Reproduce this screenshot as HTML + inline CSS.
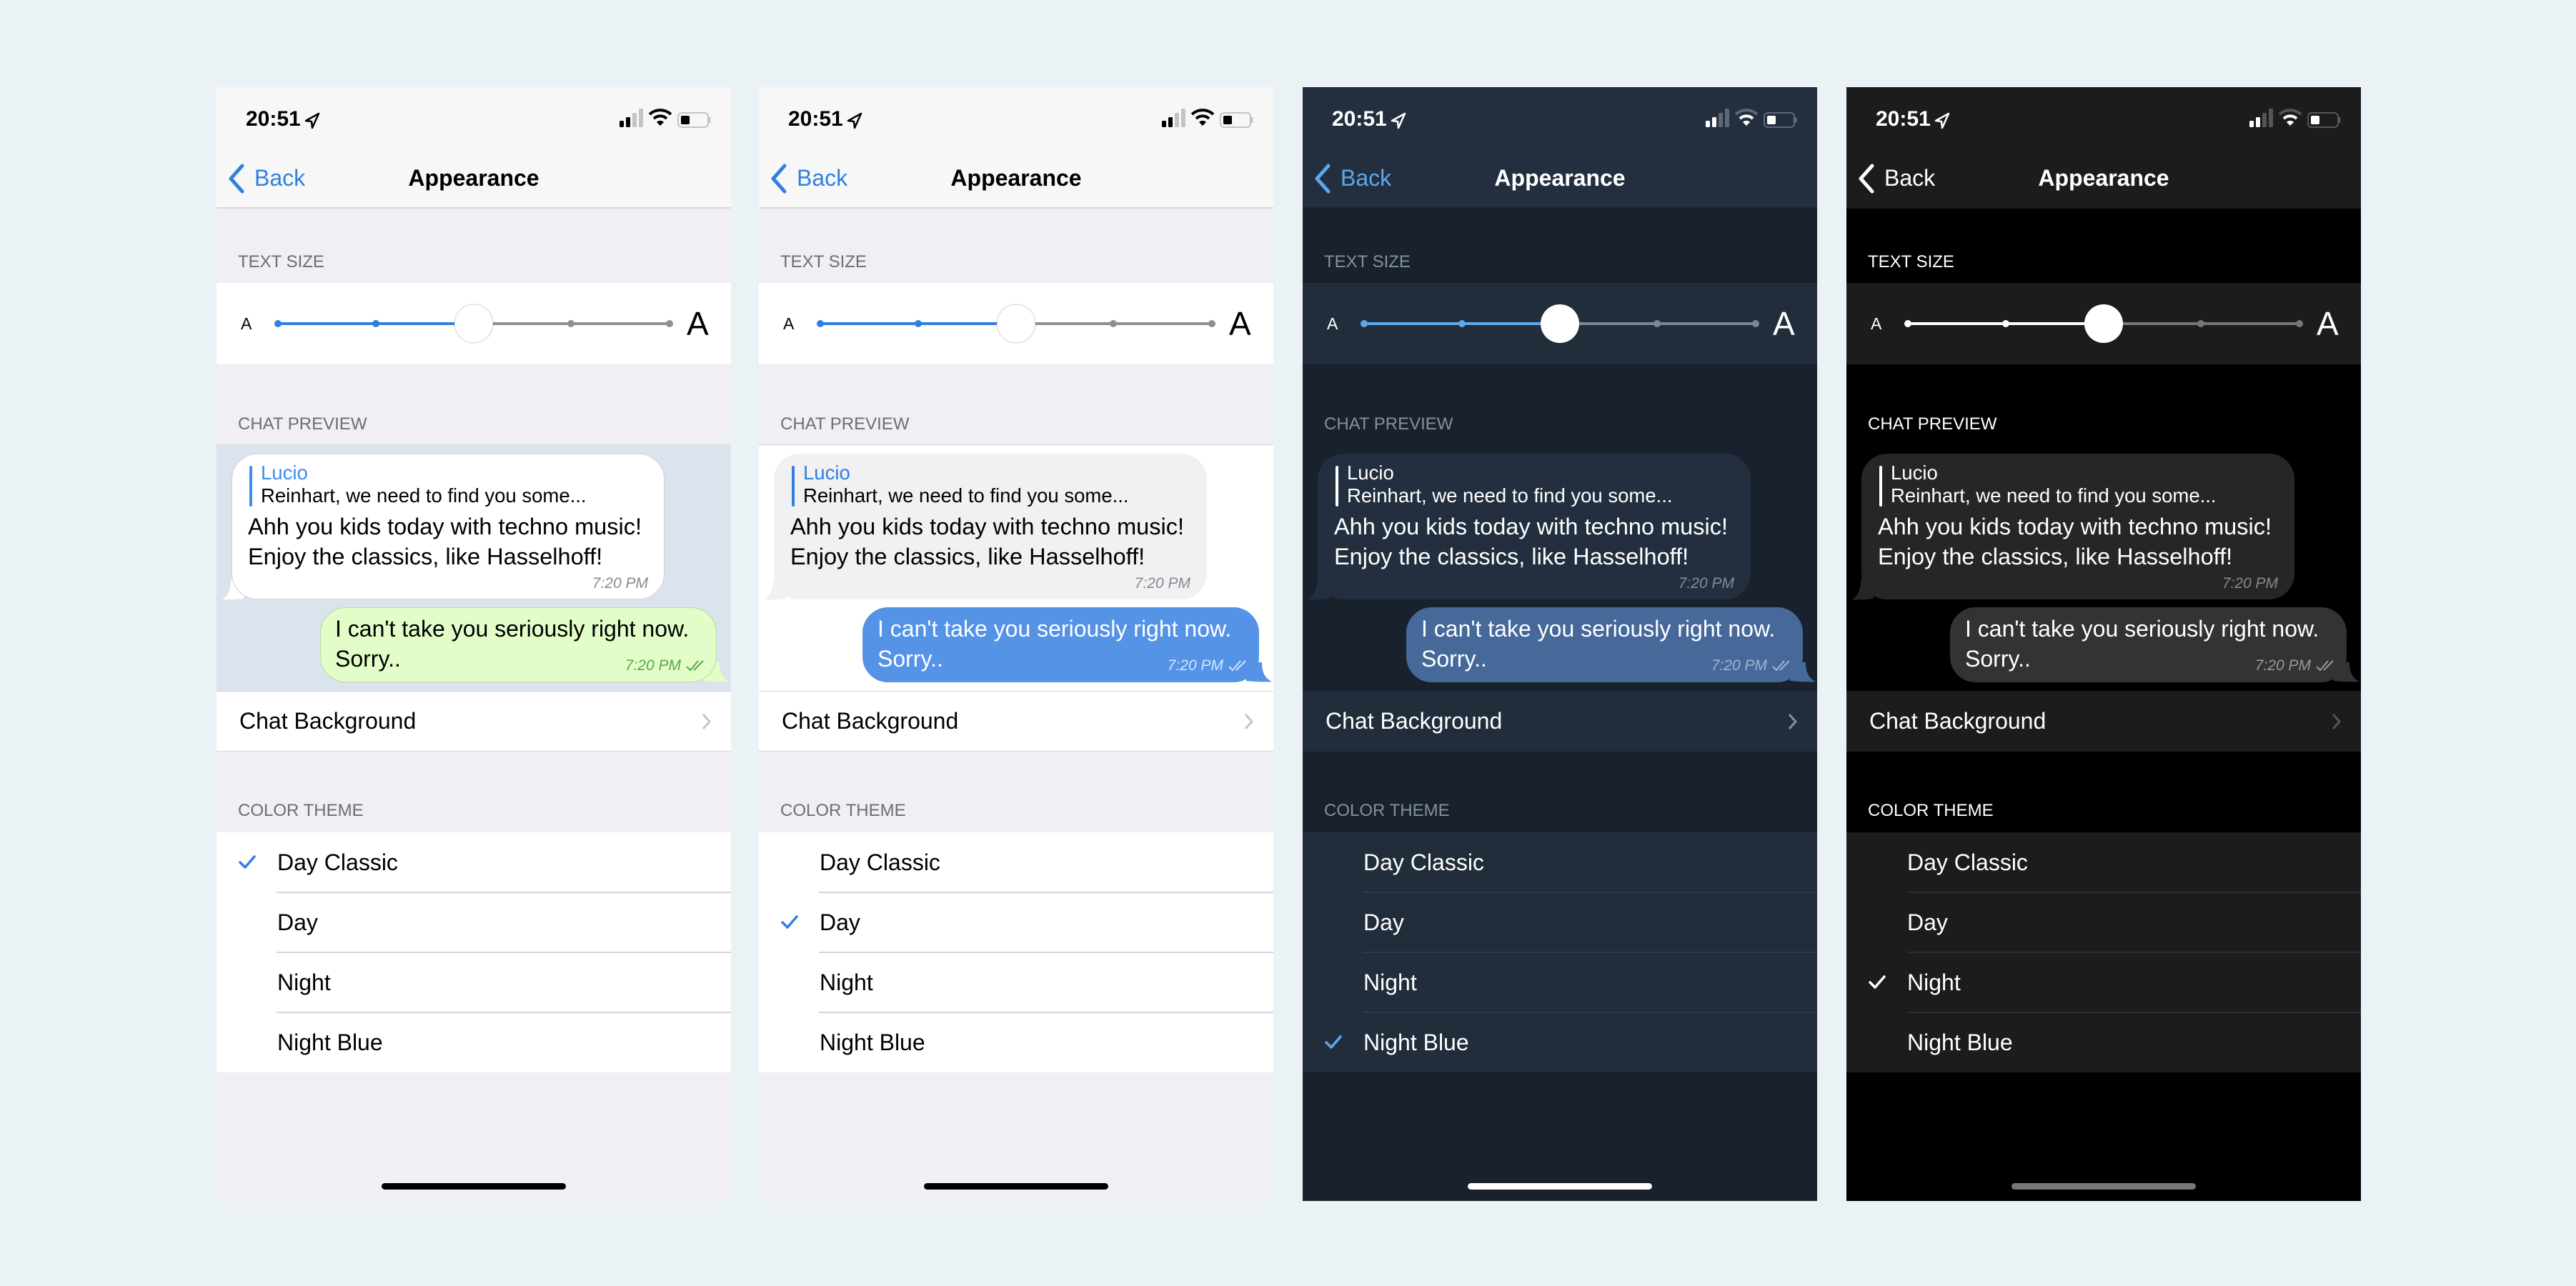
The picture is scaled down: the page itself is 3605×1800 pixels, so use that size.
<!DOCTYPE html>
<html><head><meta charset="utf-8">
<style>
*{margin:0;padding:0;box-sizing:border-box}
body{width:3605px;height:1800px;background:#ebf2f5;position:relative;overflow:hidden;font-family:"Liberation Sans",sans-serif}
.ph{position:absolute;top:122px;width:720px;height:1559px;overflow:hidden;background:var(--bg)}
.a{position:absolute;white-space:nowrap}
.nav{left:0;top:0;width:720px;height:170px;background:var(--nav);border-bottom:2px solid var(--navb)}
.time{left:41px;top:25px;line-height:40px;font-size:30px;font-weight:bold;color:var(--tx)}
.back{left:53px;top:107px;line-height:40px;font-size:32px;color:var(--ac)}
.title{left:0;width:720px;text-align:center;top:107px;line-height:40px;font-size:32px;font-weight:bold;color:var(--tx)}
.lbl{left:30px;font-size:24px;line-height:30px;color:var(--lb);text-transform:uppercase}
.cell{left:0;width:720px;background:var(--cell)}
.chat{left:0;top:500px;width:720px;height:345px;background:var(--chat)}
.b1{left:21px;top:513px;width:606px;height:204px;background:var(--b1);border-radius:36px;border:1.5px solid var(--b1b)}
.b2{left:145px;top:728px;width:555px;height:105px;background:var(--b2);border-radius:36px;border:1.5px solid var(--b2b)}
.bt{font-size:32.5px;line-height:40px;color:var(--tx)}
.b2t{font-size:32px;line-height:40px;color:var(--b2tx)}
.rp{font-size:27.5px;line-height:30px}
.tm{font-size:21px;font-style:italic;line-height:24px;color:var(--tm)}
.row{font-size:32px;line-height:40px;color:var(--tx)}
.sep{height:1.5px;background:var(--sep)}
.home{left:231px;top:1534px;width:258px;height:9px;border-radius:5px;background:var(--home)}
.p1{--bg:#efeff4;--nav:#f7f7f7;--navb:#d8d8dc;--tx:#000;--ac:#2f80e0;--lb:#6d6d72;--cell:#fff;--chat:#dbe3ec;--b1:#fff;--b1b:#c8d4e0;--b2:#e2fdc8;--b2b:#b9dca2;--b2tx:#000;--tm:#8a8a8e;--tm2:#5aa84a;--sep:#d6d6da;--home:#000;--trk:#8e8e93;--ac2:#2f80e0;--rn:#3a8ef0;--bar:#3a8ef0;--chev:#c4c4c8;--sig:#000;--sig2:#c4c4c8}
.p2{--bg:#efeff4;--nav:#f7f7f7;--navb:#d8d8dc;--tx:#000;--ac:#2f80e0;--lb:#6d6d72;--cell:#fff;--chat:#fff;--b1:#f1f1f4;--b1b:#f1f1f4;--b2:#5493e6;--b2b:#5493e6;--b2tx:#fff;--tm:#8a8a8e;--tm2:#d4e4fa;--sep:#d6d6da;--home:#000;--trk:#8e8e93;--ac2:#2f80e0;--rn:#2f80e0;--bar:#2f80e0;--chev:#c4c4c8;--sig:#000;--sig2:#c4c4c8}
.p3{--bg:#18212c;--nav:#232f3e;--navb:#1a2430;--tx:#fff;--ac:#5ca8ee;--lb:#8491a1;--cell:#222d3b;--chat:#18212c;--b1:#232f3e;--b1b:#232f3e;--b2:#46699a;--b2b:#46699a;--b2tx:#fff;--tm:#7f8c9c;--tm2:#9fb4cf;--sep:#2e3a49;--home:#fff;--trk:#7d8793;--ac2:#5ca8ee;--rn:#fff;--bar:#fff;--chev:#8491a1;--sig:#fff;--sig2:#5d6876}
.p4{--bg:#000;--nav:#1c1c1d;--navb:#1c1c1d;--tx:#fff;--ac:#fff;--lb:#fff;--cell:#1c1c1d;--chat:#000;--b1:#262628;--b1b:#262628;--b2:#333335;--b2b:#333335;--b2tx:#fff;--tm:#888;--tm2:#999;--sep:#2e2e30;--home:#777;--trk:#777;--ac2:#fff;--rn:#fff;--bar:#fff;--chev:#555;--sig:#fff;--sig2:#555}
</style></head><body>

<div class="ph p1" style="left:303px">
 <div class="a nav"></div>
 <div class="a time">20:51</div>
 <svg class="a" style="left:123px;top:35px" width="22" height="24" viewBox="0 0 22 24"><path d="M20 2 L2 12 L10 13 L11 22 Z" fill="none" stroke="var(--tx)" stroke-width="2.5" stroke-linejoin="round"/></svg>
 <svg class="a" style="left:562px;top:27px" width="130" height="32" viewBox="0 0 130 32"><rect x="2" y="20" width="6" height="9" rx="1.5" fill="var(--sig)"/><rect x="11" y="15" width="6" height="14" rx="1.5" fill="var(--sig)"/><rect x="20" y="9" width="6" height="20" rx="1.5" fill="var(--sig2)"/><rect x="29" y="3" width="6" height="26" rx="1.5" fill="var(--sig2)"/><path d="M44 11 A22 22 0 0 1 74 11" fill="none" stroke="var(--sig)" stroke-width="4"/><path d="M50 17 A13 13 0 0 1 68 17" fill="none" stroke="var(--sig)" stroke-width="4"/><path d="M59 27 L54 22 A7 7 0 0 1 64 22 Z" fill="var(--sig)"/><rect x="84" y="9" width="42" height="20" rx="5" fill="none" stroke="var(--sig2)" stroke-width="2"/><rect x="88" y="13" width="12" height="12" rx="2" fill="var(--sig)"/><rect x="127" y="15" width="2.5" height="8" fill="var(--sig2)"/></svg>
 <svg class="a" style="left:14px;top:106px" width="28" height="44" viewBox="0 0 28 44"><path d="M22 4 L6 22 L22 40" fill="none" stroke="var(--ac)" stroke-width="5" stroke-linecap="round" stroke-linejoin="round"/></svg>
 <div class="a back">Back</div>
 <div class="a title">Appearance</div>
 <div class="a lbl" style="top:230px">Text Size</div>
 <div class="a cell" style="top:274px;height:114px"></div>
 <div class="a" style="left:34px;top:316px;font-size:23px;line-height:30px;color:var(--tx)">A</div>
 <div class="a" style="left:658px;top:303px;font-size:46px;line-height:56px;color:var(--tx)">A</div>
 <svg class="a" style="left:0;top:300px" width="720" height="62" viewBox="0 300 720 62"><line x1="86" y1="331" x2="360" y2="331" stroke="var(--ac2)" stroke-width="4"/><line x1="360" y1="331" x2="634" y2="331" stroke="var(--trk)" stroke-width="4"/><circle cx="86" cy="331" r="5" fill="var(--ac2)"/><circle cx="223" cy="331" r="5" fill="var(--ac2)"/><circle cx="496" cy="331" r="5" fill="var(--trk)"/><circle cx="634" cy="331" r="5" fill="var(--trk)"/><circle cx="360" cy="331" r="27" fill="#fff" stroke="rgba(0,0,0,.12)" stroke-width="1.5"/></svg>
 <div class="a lbl" style="top:457px">Chat Preview</div>
 <div class="a chat"></div>
 <svg class="a" style="left:8px;top:690px" width="40" height="30" viewBox="0 0 40 30"><path d="M30 0 L30 26 C20 27 10 28 0 27 C8 22 12 14 12 0 Z" fill="var(--b1)"/></svg>
 <div class="a b1"></div>
 <div class="a" style="left:46px;top:530px;width:4px;height:57px;background:var(--bar);border-radius:2px"></div>
 <div class="a rp" style="left:62px;top:525px;color:var(--rn)">Lucio</div>
 <div class="a rp" style="left:62px;top:557px;color:var(--tx)">Reinhart, we need to find you some...</div>
 <div class="a bt" style="left:44px;top:595px">Ahh you kids today with techno music!</div>
 <div class="a bt" style="left:44px;top:637px">Enjoy the classics, like Hasselhoff!</div>
 <div class="a tm" style="right:116px;top:683px">7:20 PM</div>
 <svg class="a" style="left:682px;top:805px" width="36" height="30" viewBox="0 0 36 30"><path d="M0 0 L0 26 C10 27 22 28 36 27 C26 22 22 14 22 0 Z" fill="var(--b2)"/></svg>
 <div class="a b2"></div>
 <div class="a b2t" style="left:166px;top:738px">I can't take you seriously right now.</div>
 <div class="a b2t" style="left:166px;top:780px">Sorry..</div>
 <div class="a tm" style="right:70px;top:798px;color:var(--tm2)">7:20 PM</div>
 <svg class="a" style="left:656px;top:800px" width="30" height="20" viewBox="0 0 30 20"><path d="M2 11 L7 16 L18 3 M12 16 L25 3" fill="none" stroke="var(--tm2)" stroke-width="2"/></svg>
 <div class="a cell" style="top:845px;height:85px;border-top:1.5px solid var(--sep);border-bottom:1.5px solid var(--sep)"></div>
 <div class="a row" style="left:32px;top:867px">Chat Background</div>
 <svg class="a" style="left:678px;top:876px" width="16" height="24" viewBox="0 0 16 24"><path d="M3 2 L12 12 L3 22" fill="none" stroke="var(--chev)" stroke-width="3"/></svg>
 <div class="a lbl" style="top:998px">Color Theme</div>
 <div class="a cell" style="top:1043px;height:336px"></div>
 <div class="a sep" style="left:84px;top:1126px;width:636px"></div>
 <div class="a sep" style="left:84px;top:1210px;width:636px"></div>
 <div class="a sep" style="left:84px;top:1294px;width:636px"></div>
 <div class="a row" style="left:85px;top:1065px">Day Classic</div>
 <div class="a row" style="left:85px;top:1149px">Day</div>
 <div class="a row" style="left:85px;top:1233px">Night</div>
 <div class="a row" style="left:85px;top:1317px">Night Blue</div>
 <svg class="a" style="left:30px;top:1074px" width="26" height="22" viewBox="0 0 26 22"><path d="M3 11 L10 18 L23 3" fill="none" stroke="var(--ac)" stroke-width="3.5" stroke-linecap="round" stroke-linejoin="round"/></svg>
 <div class="a home"></div>
</div>

<div class="ph p2" style="left:1062px">
 <div class="a nav"></div>
 <div class="a time">20:51</div>
 <svg class="a" style="left:123px;top:35px" width="22" height="24" viewBox="0 0 22 24"><path d="M20 2 L2 12 L10 13 L11 22 Z" fill="none" stroke="var(--tx)" stroke-width="2.5" stroke-linejoin="round"/></svg>
 <svg class="a" style="left:562px;top:27px" width="130" height="32" viewBox="0 0 130 32"><rect x="2" y="20" width="6" height="9" rx="1.5" fill="var(--sig)"/><rect x="11" y="15" width="6" height="14" rx="1.5" fill="var(--sig)"/><rect x="20" y="9" width="6" height="20" rx="1.5" fill="var(--sig2)"/><rect x="29" y="3" width="6" height="26" rx="1.5" fill="var(--sig2)"/><path d="M44 11 A22 22 0 0 1 74 11" fill="none" stroke="var(--sig)" stroke-width="4"/><path d="M50 17 A13 13 0 0 1 68 17" fill="none" stroke="var(--sig)" stroke-width="4"/><path d="M59 27 L54 22 A7 7 0 0 1 64 22 Z" fill="var(--sig)"/><rect x="84" y="9" width="42" height="20" rx="5" fill="none" stroke="var(--sig2)" stroke-width="2"/><rect x="88" y="13" width="12" height="12" rx="2" fill="var(--sig)"/><rect x="127" y="15" width="2.5" height="8" fill="var(--sig2)"/></svg>
 <svg class="a" style="left:14px;top:106px" width="28" height="44" viewBox="0 0 28 44"><path d="M22 4 L6 22 L22 40" fill="none" stroke="var(--ac)" stroke-width="5" stroke-linecap="round" stroke-linejoin="round"/></svg>
 <div class="a back">Back</div>
 <div class="a title">Appearance</div>
 <div class="a lbl" style="top:230px">Text Size</div>
 <div class="a cell" style="top:274px;height:114px"></div>
 <div class="a" style="left:34px;top:316px;font-size:23px;line-height:30px;color:var(--tx)">A</div>
 <div class="a" style="left:658px;top:303px;font-size:46px;line-height:56px;color:var(--tx)">A</div>
 <svg class="a" style="left:0;top:300px" width="720" height="62" viewBox="0 300 720 62"><line x1="86" y1="331" x2="360" y2="331" stroke="var(--ac2)" stroke-width="4"/><line x1="360" y1="331" x2="634" y2="331" stroke="var(--trk)" stroke-width="4"/><circle cx="86" cy="331" r="5" fill="var(--ac2)"/><circle cx="223" cy="331" r="5" fill="var(--ac2)"/><circle cx="496" cy="331" r="5" fill="var(--trk)"/><circle cx="634" cy="331" r="5" fill="var(--trk)"/><circle cx="360" cy="331" r="27" fill="#fff" stroke="rgba(0,0,0,.12)" stroke-width="1.5"/></svg>
 <div class="a lbl" style="top:457px">Chat Preview</div>
 <div class="a chat" style="border-top:1.5px solid #d6d6da"></div>
 <svg class="a" style="left:8px;top:690px" width="40" height="30" viewBox="0 0 40 30"><path d="M30 0 L30 26 C20 27 10 28 0 27 C8 22 12 14 12 0 Z" fill="var(--b1)"/></svg>
 <div class="a b1"></div>
 <div class="a" style="left:46px;top:530px;width:4px;height:57px;background:var(--bar);border-radius:2px"></div>
 <div class="a rp" style="left:62px;top:525px;color:var(--rn)">Lucio</div>
 <div class="a rp" style="left:62px;top:557px;color:var(--tx)">Reinhart, we need to find you some...</div>
 <div class="a bt" style="left:44px;top:595px">Ahh you kids today with techno music!</div>
 <div class="a bt" style="left:44px;top:637px">Enjoy the classics, like Hasselhoff!</div>
 <div class="a tm" style="right:116px;top:683px">7:20 PM</div>
 <svg class="a" style="left:682px;top:805px" width="36" height="30" viewBox="0 0 36 30"><path d="M0 0 L0 26 C10 27 22 28 36 27 C26 22 22 14 22 0 Z" fill="var(--b2)"/></svg>
 <div class="a b2"></div>
 <div class="a b2t" style="left:166px;top:738px">I can't take you seriously right now.</div>
 <div class="a b2t" style="left:166px;top:780px">Sorry..</div>
 <div class="a tm" style="right:70px;top:798px;color:var(--tm2)">7:20 PM</div>
 <svg class="a" style="left:656px;top:800px" width="30" height="20" viewBox="0 0 30 20"><path d="M2 11 L7 16 L18 3 M12 16 L25 3" fill="none" stroke="var(--tm2)" stroke-width="2"/></svg>
 <div class="a cell" style="top:845px;height:85px;border-top:1.5px solid var(--sep);border-bottom:1.5px solid var(--sep)"></div>
 <div class="a row" style="left:32px;top:867px">Chat Background</div>
 <svg class="a" style="left:678px;top:876px" width="16" height="24" viewBox="0 0 16 24"><path d="M3 2 L12 12 L3 22" fill="none" stroke="var(--chev)" stroke-width="3"/></svg>
 <div class="a lbl" style="top:998px">Color Theme</div>
 <div class="a cell" style="top:1043px;height:336px"></div>
 <div class="a sep" style="left:84px;top:1126px;width:636px"></div>
 <div class="a sep" style="left:84px;top:1210px;width:636px"></div>
 <div class="a sep" style="left:84px;top:1294px;width:636px"></div>
 <div class="a row" style="left:85px;top:1065px">Day Classic</div>
 <div class="a row" style="left:85px;top:1149px">Day</div>
 <div class="a row" style="left:85px;top:1233px">Night</div>
 <div class="a row" style="left:85px;top:1317px">Night Blue</div>
 <svg class="a" style="left:30px;top:1158px" width="26" height="22" viewBox="0 0 26 22"><path d="M3 11 L10 18 L23 3" fill="none" stroke="var(--ac)" stroke-width="3.5" stroke-linecap="round" stroke-linejoin="round"/></svg>
 <div class="a home"></div>
</div>

<div class="ph p3" style="left:1823px">
 <div class="a nav"></div>
 <div class="a time">20:51</div>
 <svg class="a" style="left:123px;top:35px" width="22" height="24" viewBox="0 0 22 24"><path d="M20 2 L2 12 L10 13 L11 22 Z" fill="none" stroke="var(--tx)" stroke-width="2.5" stroke-linejoin="round"/></svg>
 <svg class="a" style="left:562px;top:27px" width="130" height="32" viewBox="0 0 130 32"><rect x="2" y="20" width="6" height="9" rx="1.5" fill="var(--sig)"/><rect x="11" y="15" width="6" height="14" rx="1.5" fill="var(--sig)"/><rect x="20" y="9" width="6" height="20" rx="1.5" fill="var(--sig2)"/><rect x="29" y="3" width="6" height="26" rx="1.5" fill="var(--sig2)"/><path d="M44 11 A22 22 0 0 1 74 11" fill="none" stroke="var(--sig2)" stroke-width="4"/><path d="M50 17 A13 13 0 0 1 68 17" fill="none" stroke="var(--sig)" stroke-width="4"/><path d="M59 27 L54 22 A7 7 0 0 1 64 22 Z" fill="var(--sig)"/><rect x="84" y="9" width="42" height="20" rx="5" fill="none" stroke="var(--sig2)" stroke-width="2"/><rect x="88" y="13" width="12" height="12" rx="2" fill="var(--sig)"/><rect x="127" y="15" width="2.5" height="8" fill="var(--sig2)"/></svg>
 <svg class="a" style="left:14px;top:106px" width="28" height="44" viewBox="0 0 28 44"><path d="M22 4 L6 22 L22 40" fill="none" stroke="var(--ac)" stroke-width="5" stroke-linecap="round" stroke-linejoin="round"/></svg>
 <div class="a back">Back</div>
 <div class="a title">Appearance</div>
 <div class="a lbl" style="top:230px">Text Size</div>
 <div class="a cell" style="top:274px;height:114px"></div>
 <div class="a" style="left:34px;top:316px;font-size:23px;line-height:30px;color:var(--tx)">A</div>
 <div class="a" style="left:658px;top:303px;font-size:46px;line-height:56px;color:var(--tx)">A</div>
 <svg class="a" style="left:0;top:300px" width="720" height="62" viewBox="0 300 720 62"><line x1="86" y1="331" x2="360" y2="331" stroke="var(--ac2)" stroke-width="4"/><line x1="360" y1="331" x2="634" y2="331" stroke="var(--trk)" stroke-width="4"/><circle cx="86" cy="331" r="5" fill="var(--ac2)"/><circle cx="223" cy="331" r="5" fill="var(--ac2)"/><circle cx="496" cy="331" r="5" fill="var(--trk)"/><circle cx="634" cy="331" r="5" fill="var(--trk)"/><circle cx="360" cy="331" r="27" fill="#fff"/></svg>
 <div class="a lbl" style="top:457px">Chat Preview</div>
 <div class="a chat"></div>
 <svg class="a" style="left:8px;top:690px" width="40" height="30" viewBox="0 0 40 30"><path d="M30 0 L30 26 C20 27 10 28 0 27 C8 22 12 14 12 0 Z" fill="var(--b1)"/></svg>
 <div class="a b1"></div>
 <div class="a" style="left:46px;top:530px;width:4px;height:57px;background:var(--bar);border-radius:2px"></div>
 <div class="a rp" style="left:62px;top:525px;color:var(--rn)">Lucio</div>
 <div class="a rp" style="left:62px;top:557px;color:var(--tx)">Reinhart, we need to find you some...</div>
 <div class="a bt" style="left:44px;top:595px">Ahh you kids today with techno music!</div>
 <div class="a bt" style="left:44px;top:637px">Enjoy the classics, like Hasselhoff!</div>
 <div class="a tm" style="right:116px;top:683px">7:20 PM</div>
 <svg class="a" style="left:682px;top:805px" width="36" height="30" viewBox="0 0 36 30"><path d="M0 0 L0 26 C10 27 22 28 36 27 C26 22 22 14 22 0 Z" fill="var(--b2)"/></svg>
 <div class="a b2"></div>
 <div class="a b2t" style="left:166px;top:738px">I can't take you seriously right now.</div>
 <div class="a b2t" style="left:166px;top:780px">Sorry..</div>
 <div class="a tm" style="right:70px;top:798px;color:var(--tm2)">7:20 PM</div>
 <svg class="a" style="left:656px;top:800px" width="30" height="20" viewBox="0 0 30 20"><path d="M2 11 L7 16 L18 3 M12 16 L25 3" fill="none" stroke="var(--tm2)" stroke-width="2"/></svg>
 <div class="a cell" style="top:845px;height:85px"></div>
 <div class="a row" style="left:32px;top:867px">Chat Background</div>
 <svg class="a" style="left:678px;top:876px" width="16" height="24" viewBox="0 0 16 24"><path d="M3 2 L12 12 L3 22" fill="none" stroke="var(--chev)" stroke-width="3"/></svg>
 <div class="a lbl" style="top:998px">Color Theme</div>
 <div class="a cell" style="top:1043px;height:336px"></div>
 <div class="a sep" style="left:84px;top:1126px;width:636px"></div>
 <div class="a sep" style="left:84px;top:1210px;width:636px"></div>
 <div class="a sep" style="left:84px;top:1294px;width:636px"></div>
 <div class="a row" style="left:85px;top:1065px">Day Classic</div>
 <div class="a row" style="left:85px;top:1149px">Day</div>
 <div class="a row" style="left:85px;top:1233px">Night</div>
 <div class="a row" style="left:85px;top:1317px">Night Blue</div>
 <svg class="a" style="left:30px;top:1326px" width="26" height="22" viewBox="0 0 26 22"><path d="M3 11 L10 18 L23 3" fill="none" stroke="var(--ac)" stroke-width="3.5" stroke-linecap="round" stroke-linejoin="round"/></svg>
 <div class="a home"></div>
</div>

<div class="ph p4" style="left:2584px">
 <div class="a nav"></div>
 <div class="a time">20:51</div>
 <svg class="a" style="left:123px;top:35px" width="22" height="24" viewBox="0 0 22 24"><path d="M20 2 L2 12 L10 13 L11 22 Z" fill="none" stroke="var(--tx)" stroke-width="2.5" stroke-linejoin="round"/></svg>
 <svg class="a" style="left:562px;top:27px" width="130" height="32" viewBox="0 0 130 32"><rect x="2" y="20" width="6" height="9" rx="1.5" fill="var(--sig)"/><rect x="11" y="15" width="6" height="14" rx="1.5" fill="var(--sig)"/><rect x="20" y="9" width="6" height="20" rx="1.5" fill="var(--sig2)"/><rect x="29" y="3" width="6" height="26" rx="1.5" fill="var(--sig2)"/><path d="M44 11 A22 22 0 0 1 74 11" fill="none" stroke="var(--sig2)" stroke-width="4"/><path d="M50 17 A13 13 0 0 1 68 17" fill="none" stroke="var(--sig)" stroke-width="4"/><path d="M59 27 L54 22 A7 7 0 0 1 64 22 Z" fill="var(--sig)"/><rect x="84" y="9" width="42" height="20" rx="5" fill="none" stroke="var(--sig2)" stroke-width="2"/><rect x="88" y="13" width="12" height="12" rx="2" fill="var(--sig)"/><rect x="127" y="15" width="2.5" height="8" fill="var(--sig2)"/></svg>
 <svg class="a" style="left:14px;top:106px" width="28" height="44" viewBox="0 0 28 44"><path d="M22 4 L6 22 L22 40" fill="none" stroke="var(--ac)" stroke-width="5" stroke-linecap="round" stroke-linejoin="round"/></svg>
 <div class="a back">Back</div>
 <div class="a title">Appearance</div>
 <div class="a lbl" style="top:230px">Text Size</div>
 <div class="a cell" style="top:274px;height:114px"></div>
 <div class="a" style="left:34px;top:316px;font-size:23px;line-height:30px;color:var(--tx)">A</div>
 <div class="a" style="left:658px;top:303px;font-size:46px;line-height:56px;color:var(--tx)">A</div>
 <svg class="a" style="left:0;top:300px" width="720" height="62" viewBox="0 300 720 62"><line x1="86" y1="331" x2="360" y2="331" stroke="var(--ac2)" stroke-width="4"/><line x1="360" y1="331" x2="634" y2="331" stroke="var(--trk)" stroke-width="4"/><circle cx="86" cy="331" r="5" fill="var(--ac2)"/><circle cx="223" cy="331" r="5" fill="var(--ac2)"/><circle cx="496" cy="331" r="5" fill="var(--trk)"/><circle cx="634" cy="331" r="5" fill="var(--trk)"/><circle cx="360" cy="331" r="27" fill="#fff"/></svg>
 <div class="a lbl" style="top:457px">Chat Preview</div>
 <div class="a chat"></div>
 <svg class="a" style="left:8px;top:690px" width="40" height="30" viewBox="0 0 40 30"><path d="M30 0 L30 26 C20 27 10 28 0 27 C8 22 12 14 12 0 Z" fill="var(--b1)"/></svg>
 <div class="a b1"></div>
 <div class="a" style="left:46px;top:530px;width:4px;height:57px;background:var(--bar);border-radius:2px"></div>
 <div class="a rp" style="left:62px;top:525px;color:var(--rn)">Lucio</div>
 <div class="a rp" style="left:62px;top:557px;color:var(--tx)">Reinhart, we need to find you some...</div>
 <div class="a bt" style="left:44px;top:595px">Ahh you kids today with techno music!</div>
 <div class="a bt" style="left:44px;top:637px">Enjoy the classics, like Hasselhoff!</div>
 <div class="a tm" style="right:116px;top:683px">7:20 PM</div>
 <svg class="a" style="left:682px;top:805px" width="36" height="30" viewBox="0 0 36 30"><path d="M0 0 L0 26 C10 27 22 28 36 27 C26 22 22 14 22 0 Z" fill="var(--b2)"/></svg>
 <div class="a b2"></div>
 <div class="a b2t" style="left:166px;top:738px">I can't take you seriously right now.</div>
 <div class="a b2t" style="left:166px;top:780px">Sorry..</div>
 <div class="a tm" style="right:70px;top:798px;color:var(--tm2)">7:20 PM</div>
 <svg class="a" style="left:656px;top:800px" width="30" height="20" viewBox="0 0 30 20"><path d="M2 11 L7 16 L18 3 M12 16 L25 3" fill="none" stroke="var(--tm2)" stroke-width="2"/></svg>
 <div class="a cell" style="top:845px;height:85px"></div>
 <div class="a row" style="left:32px;top:867px">Chat Background</div>
 <svg class="a" style="left:678px;top:876px" width="16" height="24" viewBox="0 0 16 24"><path d="M3 2 L12 12 L3 22" fill="none" stroke="var(--chev)" stroke-width="3"/></svg>
 <div class="a lbl" style="top:998px">Color Theme</div>
 <div class="a cell" style="top:1043px;height:336px"></div>
 <div class="a sep" style="left:84px;top:1126px;width:636px"></div>
 <div class="a sep" style="left:84px;top:1210px;width:636px"></div>
 <div class="a sep" style="left:84px;top:1294px;width:636px"></div>
 <div class="a row" style="left:85px;top:1065px">Day Classic</div>
 <div class="a row" style="left:85px;top:1149px">Day</div>
 <div class="a row" style="left:85px;top:1233px">Night</div>
 <div class="a row" style="left:85px;top:1317px">Night Blue</div>
 <svg class="a" style="left:30px;top:1242px" width="26" height="22" viewBox="0 0 26 22"><path d="M3 11 L10 18 L23 3" fill="none" stroke="var(--ac)" stroke-width="3.5" stroke-linecap="round" stroke-linejoin="round"/></svg>
 <div class="a home"></div>
</div>

</body></html>
